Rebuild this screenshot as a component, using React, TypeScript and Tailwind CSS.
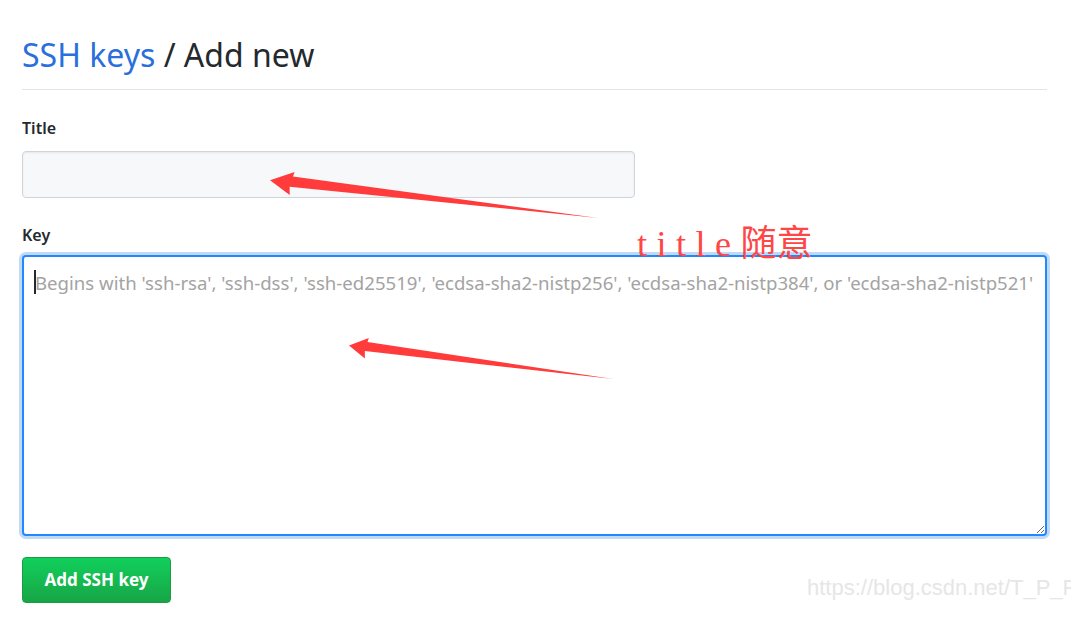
import React from 'react';

const placeholder =
  "Begins with 'ssh-rsa', 'ssh-dss', 'ssh-ed25519', 'ecdsa-sha2-nistp256', 'ecdsa-sha2-nistp384', or 'ecdsa-sha2-nistp521'";

// hand-drawn red arrow, tip on the left, tail thinning to the right
const Arrow: React.FC<{ className: string; w: number; h: number }> = ({ className, w, h }) => (
  <svg className={className} width={w} height={h} viewBox={`0 0 ${w} ${h}`}>
    <polygon
      points={`0,${h * 0.18} ${w * 0.075},0 ${w * 0.07},${h * 0.1} ${w},${h} ${w * 0.06},${h * 0.32} ${w * 0.06},${h * 0.5}`}
      fill="#ff3b3b"
    />
  </svg>
);

export default function App() {
  return (
    <div className="relative w-[1071px] h-[629px] bg-white overflow-hidden" style={{ fontFamily: '"Noto Sans", "Open Sans", sans-serif' }}>
      <div className="flex flex-col items-start pl-[22px] pt-[33px] w-[1047px]">
        <h1 className="self-stretch text-[32px] leading-[44px] pb-[12px] border-b border-[#e1e4e8] font-normal">
          <span className="text-[#2a6fdb]">SSH keys</span>
          <span className="text-[#24292e]"> / Add new</span>
        </h1>

        <label className="mt-[26px] text-[16px] font-semibold text-[#24292e] leading-[24px]">Title</label>
        <div className="mt-[11px] w-[613px] h-[47px] rounded-[4px] border border-[#d1d5da] bg-[#f6f8fa] shadow-[inset_0_1px_2px_rgba(27,31,35,0.075)]" />

        <label className="mt-[25px] text-[16px] font-semibold text-[#24292e] leading-[24px]">Key</label>
        <div className="relative mt-[8px]">
          <textarea
            className="block w-[1025px] h-[281px] rounded-[4px] border-2 border-[#2188ff] bg-white px-[11px] py-[13px] text-[18.6px] leading-[26px] outline-none shadow-[0_0_0_3px_rgba(3,102,214,0.25)] placeholder:text-[#a3a3a3] resize"
            placeholder={placeholder}
            style={{ fontFamily: '"Noto Sans", sans-serif' }}
          />
          <div className="absolute left-[12px] top-[15px] w-[2px] h-[24px] bg-[#24292e]" />
        </div>

        <button className="mt-[21px] w-[149px] h-[46px] rounded-[4px] border border-[#1b9b45] bg-gradient-to-b from-[#10d05c] to-[#17a546] text-white text-[17px] font-bold">
          Add SSH key
        </button>
      </div>

      <Arrow className="absolute left-[270px] top-[172px]" w={328} h={46} />
      <Arrow className="absolute left-[349px] top-[338px]" w={264} h={41} />

      <div className="absolute left-[637px] top-[217px] text-[36px] leading-[46px] text-[#ff4545] whitespace-nowrap">
        <span className="tracking-[9.5px]" style={{ fontFamily: '"Liberation Serif", serif' }}>title</span>
        <span style={{ fontFamily: '"Noto Sans CJK SC", sans-serif' }}>随意</span>
      </div>

      <div
        className="absolute left-[807px] top-[574px] text-[22px] leading-[28px] text-[#e6e6e6] whitespace-nowrap"
        style={{ fontFamily: '"Liberation Sans", Arial, sans-serif' }}
      >
        https://blog.csdn.net/T_P_F
      </div>
    </div>
  );
}
